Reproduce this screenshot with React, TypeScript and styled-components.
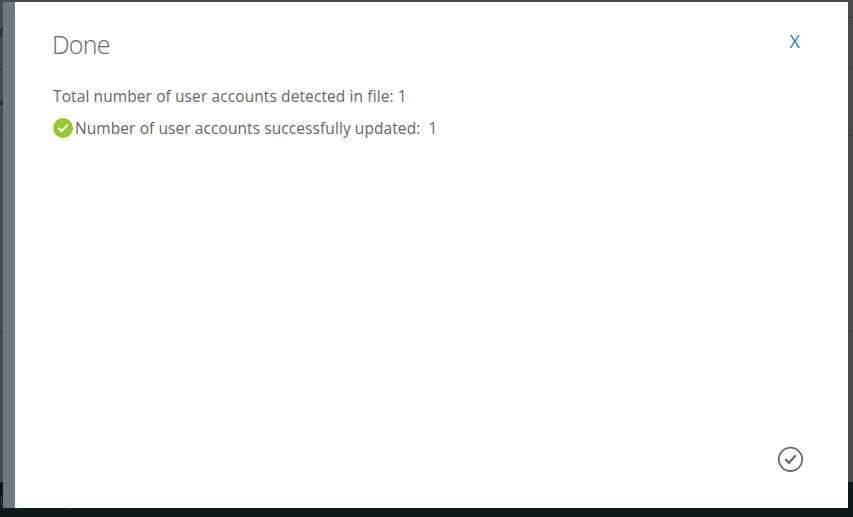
import React from "react";
import styled, { createGlobalStyle } from "styled-components";

const GlobalStyle = createGlobalStyle`
  *, *::before, *::after { box-sizing: border-box; }
  html, body, #root { height: 100%; }
  body {
    margin: 0;
    overflow: hidden;
    background: #4c4b4b;
    font-family: "Open Sans", "Noto Sans", sans-serif;
  }
`;

const Page = styled.div`
  height: 517px;
  display: flex;
  flex-direction: column;
  overflow: hidden;
`;

const Row = styled.div<{ $height: number }>`
  flex: none;
  height: ${({ $height }) => $height}px;
  border-bottom: 1px solid #3d3d3e;
  background: #4c4b4b;
`;

const Edge = styled(Row)`
  border-bottom: 0;
`;

const PageMark = styled.svg<{ $top: number }>`
  display: block;
  margin-top: ${({ $top }) => $top}px;
`;

const Footer = styled.footer`
  flex: 1;
  padding: 14px 0 0 1px;
  background: #12171a;
`;

const FooterMarks = styled.svg`
  display: block;
`;

const Overlay = styled.div`
  position: fixed;
  inset: 0;
  padding: 2px 5px 9px 3px;
`;

const Dialog = styled.section`
  width: 845px;
  height: 506px;
  display: flex;
  flex-direction: column;
  padding: 26px 45px 36px 38px;
  border-left: 12px solid #717980;
  background: #fff;
  color: #666;
`;

const Header = styled.header`
  display: flex;
  justify-content: space-between;
  height: 52px;
`;

const Title = styled.h1`
  margin: -1px 0 0 -1px;
  font-size: 25px;
  font-weight: 300;
  line-height: 34px;
  letter-spacing: -0.8px;
`;

const Close = styled.button`
  height: 26px;
  margin: 0 3px 0 0;
  padding: 0;
  border: 0;
  background: none;
  color: #1c7fb8;
  font: 400 18px/26px "Open Sans", sans-serif;
`;

const Summary = styled.div`
  flex: 1;
`;

const Line = styled.p<{ $tracking: number }>`
  display: flex;
  align-items: center;
  height: 32px;
  margin: 0;
  font-size: 15.5px;
  line-height: 24px;
  letter-spacing: ${({ $tracking }) => $tracking}px;
  white-space: pre;
`;

const Badge = styled.svg`
  flex: none;
  margin-right: 2px;
`;

const Actions = styled.footer`
  display: flex;
  justify-content: flex-end;
`;

const Confirm = styled.button`
  display: flex;
  padding: 0;
  border: 0;
  background: none;
`;

export default function App() {
  return (
    <>
      <GlobalStyle />
      <Page>
        <Row $height={18} />
        <Row $height={52}>
          <PageMark $top={10} width="3" height="9" viewBox="0 0 3 9">
            <path d="M3 0.8C-0.2 0.8 -0.2 8.2 3 8.2" fill="none" stroke="#191919" strokeWidth="1.2" />
          </PageMark>
        </Row>
        <Row $height={66}>
          <PageMark $top={29} width="3" height="7" viewBox="0 0 3 7">
            <path d="M0 4L3 0V6H0Z" fill="#20262d" />
          </PageMark>
        </Row>
        <Row $height={196} />
        <Edge $height={150} />
        <Footer>
          <FooterMarks width="72" height="14" viewBox="0 0 72 14">
            <path d="M0 0H1V10H0ZM16 12H18V13H16ZM68 12H70V13H68Z" fill="#4b4e50" />
          </FooterMarks>
        </Footer>
      </Page>
      <Overlay>
        <Dialog role="dialog" aria-labelledby="dialog-title">
          <Header>
            <Title id="dialog-title">Done</Title>
            <Close aria-label="Close">X</Close>
          </Header>
          <Summary>
            <Line $tracking={0.1}>Total number of user accounts detected in file: 1</Line>
            <Line $tracking={0.08}>
              <Badge width="20" height="20" viewBox="0 0 20 20">
                <circle cx="10" cy="10" r="10" fill="#94c832" />
                <path d="M5.3 9.8L8.6 13.1L14.7 6.6" fill="none" stroke="#fff" strokeWidth="2" />
              </Badge>
              Number of user accounts successfully updated:  1
            </Line>
          </Summary>
          <Actions>
            <Confirm aria-label="Confirm">
              <svg width="26" height="26" viewBox="0 0 26 26" fill="none" stroke="#6b6b6b">
                <circle cx="13.5" cy="13.3" r="11.7" strokeWidth="1.8" />
                <path d="M8.3 13.1L12 16.8L18.7 9.2" strokeWidth="2.3" />
              </svg>
            </Confirm>
          </Actions>
        </Dialog>
      </Overlay>
    </>
  );
}
